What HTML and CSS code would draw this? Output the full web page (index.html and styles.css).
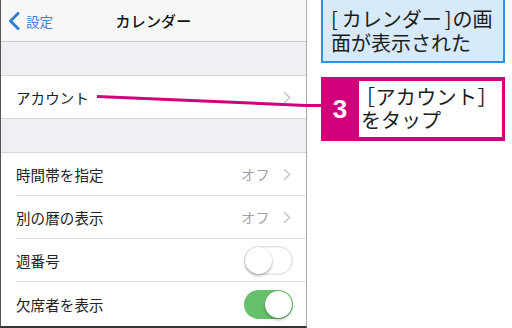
FILE: index.html
```html
<!DOCTYPE html>
<html lang="ja">
<head>
<meta charset="utf-8">
<link rel="stylesheet" href="styles.css">
</head>
<body>
<div class="page">
  <div class="phone">
    <div class="navbar">
      <div class="back">
        <svg class="back-chev" width="12" height="18" viewBox="0 0 12 18"><path d="M10 1.5 L2.5 9 L10 16.5" fill="none" stroke="#2f7fd6" stroke-width="3" stroke-linecap="round" stroke-linejoin="round"/></svg>
        <span>設定</span>
      </div>
      <div class="title">カレンダー</div>
      <div></div>
    </div>
    <div class="gap"></div>
    <div class="group">
      <div class="row">
        <span class="label">アカウント</span>
        <svg class="chev" width="8" height="13" viewBox="0 0 8 13"><path d="M1 1 L6.5 6.5 L1 12" fill="none" stroke="#c7c7cc" stroke-width="1.5"/></svg>
      </div>
    </div>
    <div class="gap"></div>
    <div class="group fill">
      <div class="row">
        <span class="label">時間帯を指定</span>
        <span class="value">オフ</span>
        <svg class="chev" width="8" height="13" viewBox="0 0 8 13"><path d="M1 1 L6.5 6.5 L1 12" fill="none" stroke="#c7c7cc" stroke-width="1.5"/></svg>
      </div>
      <div class="row">
        <span class="label">別の暦の表示</span>
        <span class="value">オフ</span>
        <svg class="chev" width="8" height="13" viewBox="0 0 8 13"><path d="M1 1 L6.5 6.5 L1 12" fill="none" stroke="#c7c7cc" stroke-width="1.5"/></svg>
      </div>
      <div class="row toggle-row">
        <span class="label">週番号</span>
        <span class="toggle"><span class="knob"></span></span>
      </div>
      <div class="row toggle-row last">
        <span class="label">欠席者を表示</span>
        <span class="toggle on"><span class="knob"></span></span>
      </div>
    </div>
  </div>
  <div class="notes">
    <div class="note-blue"><span class="br-o">[</span>カレンダー<span class="br-c">]</span>の画<br>面が表示された</div>
    <div class="note-step">
      <div class="num">3</div>
      <div class="step-text"><span class="line1">［アカウント］</span><br>をタップ</div>
    </div>
  </div>
  <svg class="leader" width="512" height="328" viewBox="0 0 512 328"><polyline points="97,96.5 306,105.5 322,105.5" fill="none" stroke="#d0007b" stroke-width="3"/></svg>
</div>
</body>
</html>
```

FILE: styles.css
```css
html, body {
  margin: 0;
  padding: 0;
  background: #fff;
}
body {
  font-family: "Noto Sans CJK JP", "Noto Sans", sans-serif;
}
.page {
  position: relative;
  width: 512px;
  height: 328px;
  display: flex;
  overflow: hidden;
}
.phone {
  width: 305px;
  height: 326px;
  border-left: 1px solid #555;
  border-right: 1px solid #a9a9a9;
  border-bottom: 2px solid #333;
  background: #efeff4;
  display: flex;
  flex-direction: column;
}
.navbar {
  height: 41px;
  background: #f7f7f7;
  border-bottom: 1px solid #c8c7cc;
  display: grid;
  grid-template-columns: 1fr auto 1fr;
  align-items: center;
}
.back {
  display: flex;
  align-items: center;
  gap: 6px;
  padding-left: 7px;
  color: #3b84d6;
  font-size: 13.5px;
}
.back-chev {
  display: block;
}
.title {
  font-size: 15px;
  font-weight: 500;
  color: #111;
  letter-spacing: 0.2px;
}
.gap {
  height: 33px;
}
.group {
  background: #fff;
  border-top: 1px solid #d6d6da;
  border-bottom: 1px solid #d6d6da;
}
.group.fill {
  flex: 1;
  border-bottom: none;
}
.row {
  height: 42px;
  margin-left: 15px;
  padding-right: 15px;
  display: flex;
  align-items: center;
  border-bottom: 1px solid #e0e0e3;
  font-size: 14.5px;
  color: #222;
}
.group .row:only-child,
.row.last {
  border-bottom: none;
}
.row.last {
  height: 44px;
}
.label {
  flex: 1;
  letter-spacing: 0.1px;
}
.value {
  color: #a2a2a6;
  font-size: 14px;
  margin-right: 13px;
  letter-spacing: 0.5px;
}
.chev {
  display: block;
}
.toggle-row {
  padding-right: 13px;
}
.toggle {
  position: relative;
  width: 49px;
  height: 29px;
  border-radius: 15px;
  background: #fff;
  box-shadow: inset 0 0 0 1.5px #e6e6e9;
}
.toggle .knob {
  position: absolute;
  top: 1px;
  left: 1px;
  width: 27px;
  height: 27px;
  border-radius: 50%;
  background: #fff;
  box-shadow: 0 2px 3px rgba(0,0,0,0.25), 0 0 0 0.5px rgba(0,0,0,0.08);
}
.toggle.on {
  background: #66c06a;
  box-shadow: none;
}
.toggle.on .knob {
  left: 21px;
}
.notes {
  margin-left: 14px;
  width: 184px;
  display: flex;
  flex-direction: column;
}
.note-blue {
  margin-top: -3px;
  height: 66px;
  box-sizing: border-box;
  background: #d6eaf9;
  border: 2.5px solid #2e90e2;
  padding: 7.5px 0 0 8px;
  font-size: 20px;
  line-height: 24.5px;
  color: #1c1c1c;
  white-space: nowrap;
}
.br-o {
  margin-right: 4px;
}
.br-c {
  margin-left: 3px;
  margin-right: 1px;
}
.note-step {
  margin-top: 14px;
  height: 64px;
  box-sizing: border-box;
  background: #d0007b;
  display: flex;
  padding: 4px 3px 4px 0;
}
.num {
  width: 38px;
  display: flex;
  align-items: center;
  justify-content: center;
  color: #fff;
  font-family: "Liberation Sans", sans-serif;
  font-weight: bold;
  font-size: 26px;
}
.step-text {
  flex: 1;
  background: #fff;
  padding: 4px 0 0 2px;
  font-size: 20px;
  line-height: 23px;
  color: #1c1c1c;
  white-space: nowrap;
}
.line1 {
  margin-left: -6px;
  letter-spacing: 0.4px;
}
.leader {
  position: absolute;
  left: 0;
  top: 0;
  pointer-events: none;
}
```
